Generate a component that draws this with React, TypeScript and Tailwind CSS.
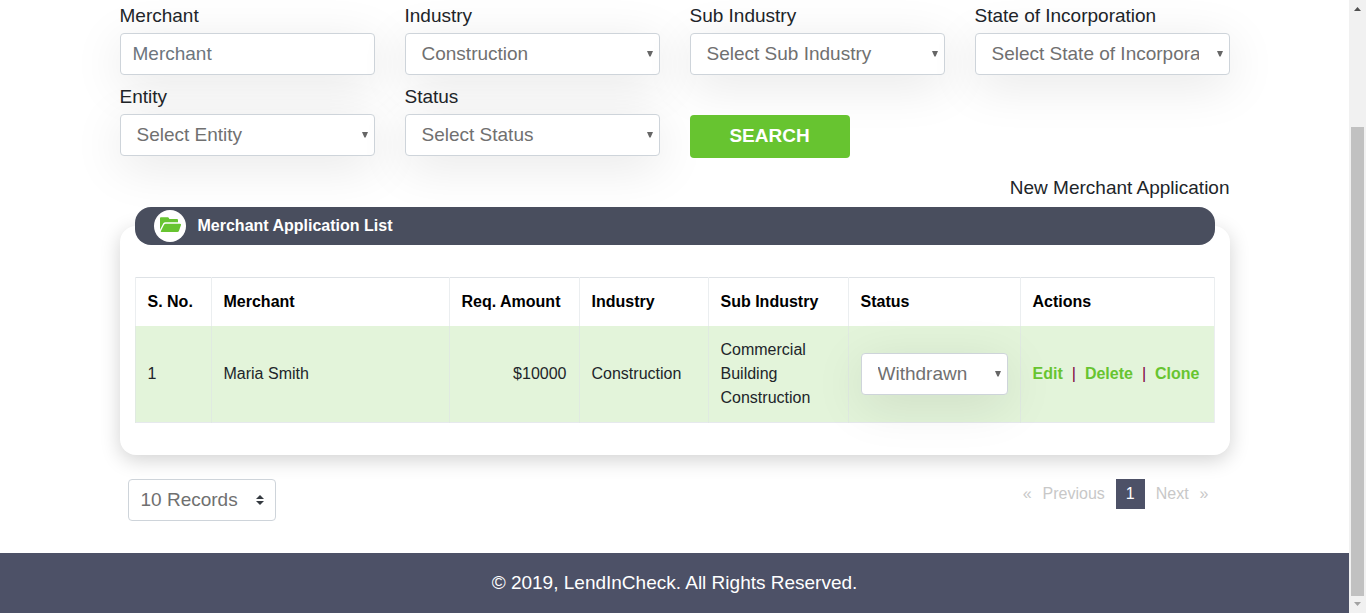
import React from "react";

const controlShadow = "shadow-[0_10px_50px_rgba(0,0,0,0.1)]";

function FolderIcon() {
  return (
    <svg className="mb-1 ml-[1px] h-[15px] w-[21px]" viewBox="0 0 63 45" fill="#67c430" aria-hidden="true">
      <path d="M0 3Q0 1 3 1H23Q26 1 27 4L28 6H51Q54 6 54 9V16H16Q12 16 10 19L0 38Z" />
      <path d="M17 20H60Q64 20 63 24L57 41Q56 45 52 45H5Q1 45 3 41L12 23Q14 20 17 20Z" />
    </svg>
  );
}

function SelectBox({ id, label, options }: { id: string; label: string; options: string[] }) {
  return (
    <div className="relative">
      <select
        id={id}
        aria-label={label}
        className={`block h-[42px] w-full appearance-none overflow-hidden rounded-[4px] border border-[#ced4da] bg-white pr-[30px] pl-4 text-[19px] text-[#707070] ${controlShadow}`}
      >
        {options.map((o) => (
          <option key={o}>{o}</option>
        ))}
      </select>
      <svg
        className="pointer-events-none absolute top-[18px] right-[7px] h-[6px] w-[6px]"
        viewBox="0 0 6 6"
        aria-hidden="true"
      >
        <path d="M0 0H6L3.6 5.5H2.4Z" fill="#666" />
      </svg>
    </div>
  );
}

function Field({ id, label, children }: { id: string; label: string; children: React.ReactNode }) {
  return (
    <div>
      <label htmlFor={id} className="relative mb-[3px] block leading-7">
        {label}
      </label>
      {children}
    </div>
  );
}

const filters = [
  { id: "industry", label: "Industry", options: ["Construction"] },
  { id: "sub-industry", label: "Sub Industry", options: ["Select Sub Industry"] },
  { id: "state", label: "State of Incorporation", options: ["Select State of Incorporation"] },
  { id: "entity", label: "Entity", options: ["Select Entity"] },
  { id: "status", label: "Status", options: ["Select Status"] },
];

const columns = [
  { name: "S. No.", width: "w-[76px]" },
  { name: "Merchant", width: "" },
  { name: "Req. Amount", width: "w-[130px]" },
  { name: "Industry", width: "w-[129px]" },
  { name: "Sub Industry", width: "w-[140px]" },
  { name: "Status", width: "w-[172px]" },
  { name: "Actions", width: "w-[194px]" },
];

const cell = "border-x border-[#dee2e6]/60 px-3 py-3";

function ScrollTrack() {
  return (
    <div className="flex w-[17px] shrink-0 flex-col bg-[#f1f1f1]" aria-hidden="true">
      <svg className="h-[17px] w-[17px]" viewBox="0 0 17 17">
        <path d="M5 11L8.5 7L12 11Z" fill="#505050" />
      </svg>
      <div className="grow-[110]" />
      <div className="mx-[2px] grow-[469] bg-[#c1c1c1]" />
      <svg className="h-[17px] w-[17px]" viewBox="0 0 17 17">
        <path d="M5 6L8.5 10L12 6Z" fill="#a3a3a3" />
      </svg>
    </div>
  );
}

export default function App() {
  return (
    <div className="flex min-h-screen bg-white font-['Liberation_Sans',Arial,sans-serif] text-[19px] text-[#212529]">
      <div className="flex min-w-0 flex-1 flex-col">
        <main className="mx-auto w-full max-w-[1110px] flex-1 pt-[2px]">
          <form className="grid grid-cols-4 gap-x-[30px] gap-y-2" onSubmit={(e) => e.preventDefault()}>
            <Field id="merchant" label="Merchant">
              <input
                id="merchant"
                type="text"
                placeholder="Merchant"
                className={`block h-[42px] w-full rounded-[4px] border border-[#ced4da] bg-white px-3 placeholder:text-[#6c757d] ${controlShadow}`}
              />
            </Field>
            {filters.map((f) => (
              <Field key={f.id} id={f.id} label={f.label}>
                <SelectBox {...f} />
              </Field>
            ))}
            <div className="flex items-end">
              <button
                type="submit"
                className="relative -mb-[2px] h-[43px] w-40 rounded-[4px] bg-[#67c430] font-bold text-white"
              >
                SEARCH
              </button>
            </div>
          </form>

          <div className="relative mt-[18px] text-right leading-7">
            <a href="#new">New Merchant Application</a>
          </div>

          <section className="mt-[24px] rounded-[16px] bg-white px-[15px] pb-8 shadow-[0_5px_20px_rgba(0,0,0,0.18)]">
            <h2 className="relative -top-[19px] -mb-[19px] flex h-[38px] items-center gap-3 rounded-[16px] bg-[#494e5e] pl-[19px] text-[16px] font-bold text-white">
              <span className="flex h-8 w-8 items-center justify-center rounded-full bg-white">
                <FolderIcon />
              </span>
              Merchant Application List
            </h2>
            <table className="mt-8 w-full table-fixed border-collapse text-[16px] leading-6">
              <colgroup>
                {columns.map((c) => (
                  <col key={c.name} className={c.width} />
                ))}
              </colgroup>
              <thead>
                <tr className="border-t border-[#dee2e6] text-left text-black">
                  {columns.map((c) => (
                    <th key={c.name} className={`${cell} font-bold whitespace-nowrap`}>
                      {c.name}
                    </th>
                  ))}
                </tr>
              </thead>
              <tbody>
                <tr className="border-b border-[#e6e9ed] bg-[#e3f4da]">
                  <td className={cell}>1</td>
                  <td className={cell}>Maria Smith</td>
                  <td className={`${cell} text-right`}>$10000</td>
                  <td className={cell}>Construction</td>
                  <td className={cell}>Commercial Building Construction</td>
                  <td className={cell}>
                    <SelectBox id="row-status" label="Application status" options={["Withdrawn"]} />
                  </td>
                  <td className={cell}>
                    <div className="relative flex gap-[9px] font-bold text-[#67c430]">
                      <a href="#edit">Edit</a>
                      <span className="font-normal text-[#800040]">|</span>
                      <a href="#delete">Delete</a>
                      <span className="font-normal text-[#800040]">|</span>
                      <a href="#clone">Clone</a>
                    </div>
                  </td>
                </tr>
              </tbody>
            </table>
          </section>

          <div className="mt-6 mb-8 flex items-start justify-between pr-[21px] pl-2">
            <div className="relative w-[148px]">
              <select
                aria-label="Records per page"
                className="block h-[42px] w-full appearance-none rounded-[4px] border border-[#ced4da] bg-white pr-7 pl-3 text-[19px] text-[#707070]"
              >
                <option>10 Records</option>
              </select>
              <svg
                className="pointer-events-none absolute top-4 right-3 h-[10px] w-[8px]"
                viewBox="0 0 4 5"
                aria-hidden="true"
              >
                <path d="M2 0L0 2h4zm0 5L0 3h4z" fill="#343a40" />
              </svg>
            </div>
            <nav aria-label="Pagination" className="flex h-[30px] items-center gap-[11px] text-[16px] text-[#c8c8c8]">
              <a href="#first">«</a>
              <a href="#previous">Previous</a>
              <a href="#1" className="bg-[#4d5167] px-[10px] leading-[30px] text-white">
                1
              </a>
              <a href="#next">Next</a>
              <a href="#last">»</a>
            </nav>
          </div>
        </main>
        <footer className="flex h-[60px] items-center justify-center bg-[#4d5167] text-white">
          © 2019, LendInCheck. All Rights Reserved.
        </footer>
      </div>
      <ScrollTrack />
    </div>
  );
}
